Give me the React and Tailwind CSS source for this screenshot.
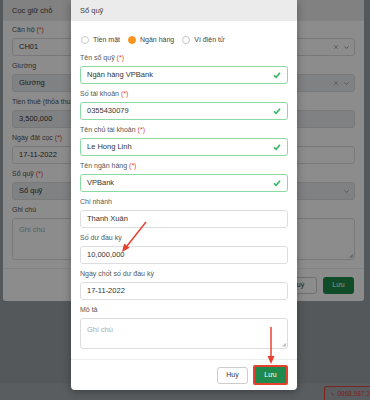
import React from 'react';
import { Phone, X, ChevronDown } from 'lucide-react';

const Req = () => <span className="text-[#e0443a]">(*)</span>;

const CheckIcon = () => (
  <svg viewBox="0 0 8 8" className="h-[8px] w-[8px] shrink-0">
    <path d="M1 4.3 L3.1 6.3 L7 1.7" fill="none" stroke="#3cb663" strokeWidth="1.7" />
  </svg>
);

const Field = ({ label, required, children, last }) => (
  <div className={last ? '' : 'mb-[4px]'}>
    <div className="mb-[2px] h-[12px] whitespace-nowrap text-[7px] leading-[12px] text-[#555]">
      {label} {required && <Req />}
    </div>
    {children}
  </div>
);

const Input = ({ value, placeholder, valid, disabled, clear, chevron }) => (
  <div
    className={`flex h-[18px] items-center justify-between rounded-[3px] border pl-[6px] ${
      chevron ? 'pr-[4px]' : 'pr-[6px]'
    } text-[7.5px] ${valid ? 'border-[#8adba3]' : 'border-[#dddddd]'} ${disabled ? 'bg-[#e9ecef]' : 'bg-white'}`}
  >
    <span className={value ? 'text-[#333]' : 'text-[#aaa]'}>{value || placeholder}</span>
    <div className="flex items-center gap-[4px] text-[#999]">
      {valid && <CheckIcon />}
      {clear && <X className="h-[6px] w-[6px]" strokeWidth={3} />}
      {chevron && <ChevronDown className="h-[7px] w-[7px]" strokeWidth={3} />}
    </div>
  </div>
);

const TextArea = ({ h }) => (
  <div className={`relative rounded-[3px] border border-[#dddddd] bg-white px-[6px] py-[5px] text-[7.5px] text-[#aaa] ${h}`}>
    Ghi chú
    <span className="absolute bottom-[1px] right-[1px] text-[5px] leading-none text-[#bbb]">◢</span>
  </div>
);

const Radio = ({ label, checked }) => (
  <div className="flex items-center gap-[4px]">
    <span
      className={`h-[8px] w-[8px] rounded-full border ${
        checked ? 'border-[#f7931e] bg-[#f7931e]' : 'border-[#c8c8c8] bg-white'
      }`}
    />
    <span className="text-[7px] text-[#444]">{label}</span>
  </div>
);

export default function App() {
  return (
    <div className="relative h-[400px] w-[370px] overflow-hidden bg-[#99a0a7] font-['Liberation_Sans',Arial,sans-serif]">
      {/* page under both dialogs */}
      <div className="flex h-full flex-col">
        <div className="flex-1 pl-[3px]">
          {/* first dialog: Cọc giữ chỗ */}
          <div className="w-[361px] overflow-hidden rounded-b-[3px] bg-white">
            <div className="flex h-[21px] items-center bg-[#ebebeb] px-[9px] text-[7.5px] text-[#444]">Cọc giữ chỗ</div>
            <div className="px-[9px] pb-[8px] pt-[3px]">
              <Field label="Căn hộ" required>
                <Input value="CH01" clear chevron />
              </Field>
              <Field label="Giường">
                <Input value="Giường" disabled clear chevron />
              </Field>
              <Field label="Tiền thuê (thỏa thuận)" required>
                <Input value="3,500,000" disabled />
              </Field>
              <Field label="Ngày đặt cọc" required>
                <Input value="17-11-2022" />
              </Field>
              <Field label="Sổ quỹ" required>
                <Input value="Sổ quỹ" disabled chevron />
              </Field>
              <Field label="Ghi chú" last>
                <TextArea h="h-[42px]" />
              </Field>
            </div>
            <div className="flex h-[33px] items-center justify-end gap-[6px] border-t border-[#eeeeee] px-[10px]">
              <button className="h-[17px] w-[38px] rounded-[3px] border border-[#cccccc] bg-white text-[7px] text-[#333]">Huỷ</button>
              <button className="h-[17px] w-[31px] rounded-[3px] bg-[#1f8a4c] text-[7px] text-white">Lưu</button>
            </div>
          </div>
        </div>
        <div className="flex h-[17px] items-end justify-end bg-[#a3a9b0]">
          <div className="flex h-[14px] w-[46px] items-center gap-[3px] rounded-tl-[3px] border border-r-0 border-b-0 border-[#e0443a] pl-[6px] text-[6.5px] text-[#e0443a]">
            <Phone className="h-[6px] w-[6px]" />
            <span className="whitespace-nowrap">0868.987.3</span>
          </div>
        </div>
      </div>

      {/* backdrop */}
      <div className="absolute inset-0 bg-black/45" />

      {/* second dialog: Sổ quỹ */}
      <div className="absolute left-[71px] top-0 w-[226px] overflow-hidden rounded-b-[4px] bg-white shadow-[0_2px_8px_rgba(0,0,0,0.3)]">
        <div className="flex h-[21px] items-center bg-[#ebebeb] px-[9px] text-[7.5px] text-[#444]">Sổ quỹ</div>
        <div className="px-[9px] pb-[10px] pt-[13px]">
          <div className="mb-[6px] flex h-[12px] items-center gap-[8px] pl-[1px]">
            <Radio label="Tiền mặt" />
            <Radio label="Ngân hàng" checked />
            <Radio label="Ví điện tử" />
          </div>
          <Field label="Tên sổ quỹ" required>
            <Input value="Ngân hàng VPBank" valid />
          </Field>
          <Field label="Số tài khoản" required>
            <Input value="0355430079" valid />
          </Field>
          <Field label="Tên chủ tài khoản" required>
            <Input value="Le Hong Linh" valid />
          </Field>
          <Field label="Tên ngân hàng" required>
            <Input value="VPBank" valid />
          </Field>
          <Field label="Chi nhánh">
            <Input value="Thanh Xuân" />
          </Field>
          <Field label="Số dư đầu kỳ">
            <Input value="10,000,000" />
          </Field>
          <Field label="Ngày chốt số dư đầu kỳ">
            <Input value="17-11-2022" />
          </Field>
          <Field label="Mô tả" last>
            <TextArea h="h-[31px]" />
          </Field>
        </div>
        <div className="flex h-[31px] items-center justify-end gap-[5px] border-t border-[#eeeeee] pr-[9px]">
          <button className="h-[17px] w-[31px] rounded-[3px] border border-[#cccccc] bg-white text-[7px] text-[#333]">Huỷ</button>
          <button className="h-[20px] w-[35px] rounded-[2px] border-2 border-[#e5412f] bg-[#1f8a4c] text-[7px] text-white">Lưu</button>
        </div>
      </div>

      {/* red annotation arrows */}
      <svg className="pointer-events-none absolute inset-0" width="370" height="400" viewBox="0 0 370 400">
        <line x1="146" y1="222" x2="127" y2="246" stroke="#e8402f" strokeWidth="1.5" />
        <polygon points="122,252 129.7,247.8 124.1,243.6" fill="#e8402f" />
        <line x1="271" y1="327" x2="271" y2="357" stroke="#e8402f" strokeWidth="1.5" />
        <polygon points="271,364 267.5,356 274.5,356" fill="#e8402f" />
      </svg>
    </div>
  );
}
